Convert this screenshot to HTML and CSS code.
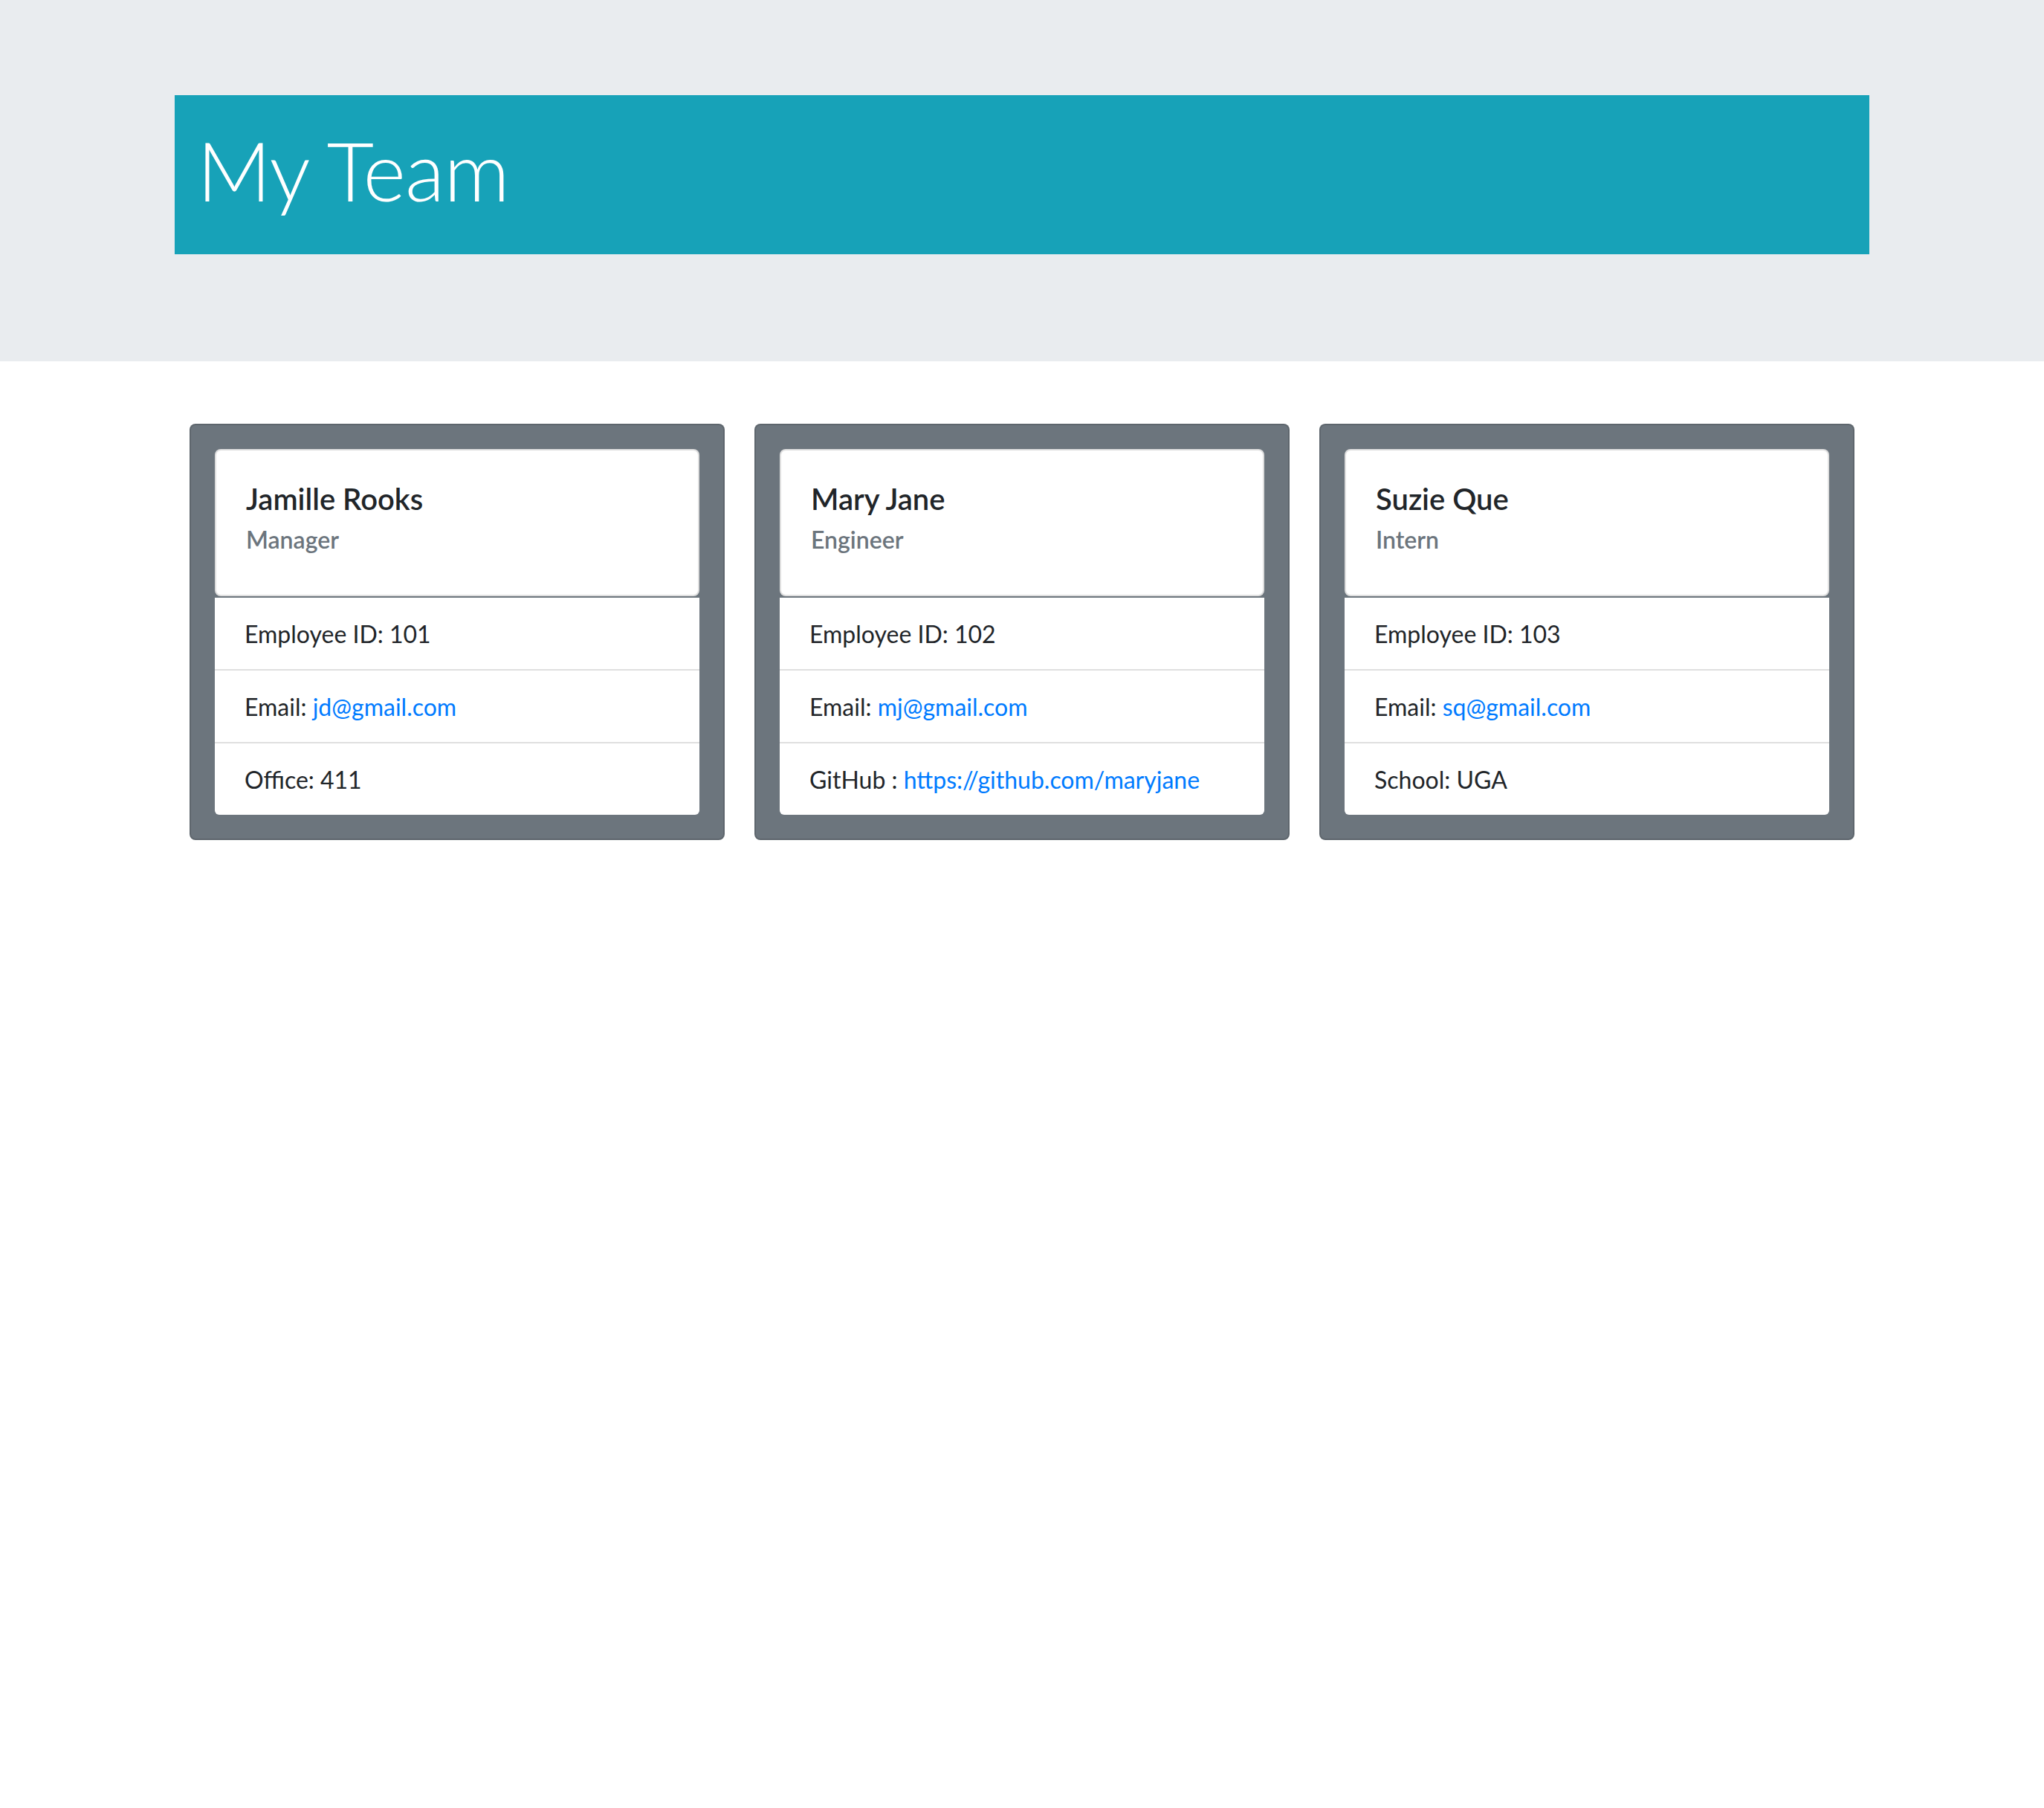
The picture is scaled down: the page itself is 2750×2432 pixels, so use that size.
FILE: index.html
```html
<!DOCTYPE html>
<html lang="en">
<head>
<meta charset="utf-8">
<title>My Team</title>
<link rel="stylesheet" href="styles.css">
</head>
<body>
<header class="jumbotron">
  <div class="banner">
    <h1 class="banner-title">My Team</h1>
  </div>
</header>
<main class="team">
  <section class="card">
    <div class="card-head">
      <h5 class="card-title">Jamille Rooks</h5>
      <h6 class="card-subtitle">Manager</h6>
    </div>
    <ul class="list">
      <li class="list-item">Employee ID: 101</li>
      <li class="list-item">Email: <a class="link" href="#">jd@gmail.com</a></li>
      <li class="list-item">Office: 411</li>
    </ul>
  </section>
  <section class="card">
    <div class="card-head">
      <h5 class="card-title">Mary Jane</h5>
      <h6 class="card-subtitle">Engineer</h6>
    </div>
    <ul class="list">
      <li class="list-item">Employee ID: 102</li>
      <li class="list-item">Email: <a class="link" href="#">mj@gmail.com</a></li>
      <li class="list-item">GitHub : <a class="link" href="#">https://github.com/maryjane</a></li>
    </ul>
  </section>
  <section class="card">
    <div class="card-head">
      <h5 class="card-title">Suzie Que</h5>
      <h6 class="card-subtitle">Intern</h6>
    </div>
    <ul class="list">
      <li class="list-item">Employee ID: 103</li>
      <li class="list-item">Email: <a class="link" href="#">sq@gmail.com</a></li>
      <li class="list-item">School: UGA</li>
    </ul>
  </section>
</main>
</body>
</html>
```

FILE: styles.css
```css
* { box-sizing: border-box; }

html, body {
  margin: 0;
  padding: 0;
  background: #ffffff;
}

body {
  font-family: "Lato", "Open Sans", "Noto Sans", sans-serif;
  font-size: 32px;
  line-height: 48px;
  color: #212529;
}

.jumbotron {
  background: #e9ecef;
  padding: 128px 0 144px;
}

.banner {
  width: 2280px;
  margin: 0 auto;
  background: #17a2b8;
  padding: 33px 30px 47px;
}

.banner-title {
  margin: 0;
  font-size: 110px;
  line-height: 134px;
  font-weight: 300;
  color: #ffffff;
  letter-spacing: -1px;
}

.team {
  width: 2240px;
  margin: 84px auto 0;
  display: flex;
  gap: 40px;
}

.card {
  flex: 1 1 0;
  background: #6c757d;
  border: 2px solid rgba(0, 0, 0, 0.125);
  border-radius: 8px;
  padding: 32px;
}

.card-head {
  background: #ffffff;
  border: 2px solid rgba(0, 0, 0, 0.125);
  border-radius: 8px;
  padding: 41px 40px 55px;
  margin-bottom: 2px;
}

.card-title {
  margin: 0 0 12px;
  font-size: 40px;
  line-height: 48px;
  font-weight: 600;
  color: #212529;
}

.card-subtitle {
  margin: 0;
  font-size: 32px;
  line-height: 38px;
  font-weight: 600;
  color: #6c757d;
}

.list {
  list-style: none;
  margin: 0;
  padding: 0;
  background: #ffffff;
  border-radius: 0 0 6px 6px;
}

.list-item {
  padding: 25px 40px 23px;
  line-height: 48px;
}

.list-item + .list-item {
  border-top: 2px solid rgba(0, 0, 0, 0.125);
}

.link {
  color: #007bff;
  text-decoration: none;
}
```
